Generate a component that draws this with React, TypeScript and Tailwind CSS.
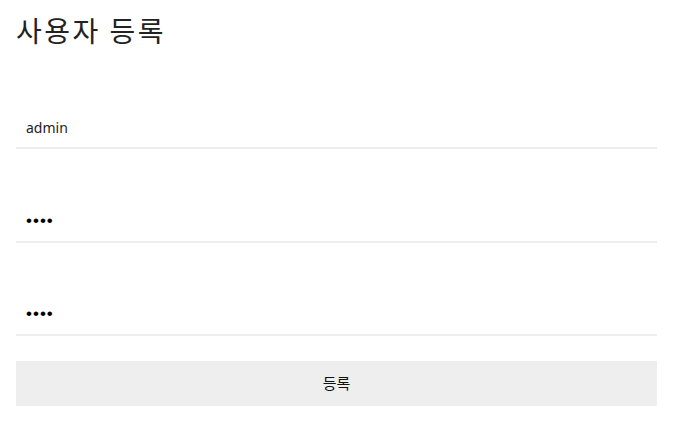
import React from "react";

export default function App() {
  return (
    <div className="flex w-[673px] h-[425px] flex-col bg-white px-4 font-['Noto_Sans','Noto_Sans_CJK_KR',sans-serif]">
      <h1 className="pt-[10px] text-[28px] leading-[40px] font-normal tracking-[2.5px] text-[#222] font-['Noto_Sans_CJK_KR',sans-serif]">
        사용자 등록
      </h1>
      <input
        className="mt-[57px] block w-full h-[42px] px-[10px] border-b-2 border-[#eeeeee] text-[14px] text-[#222] outline-none"
        defaultValue="admin"
        readOnly
      />
      <input
        type="password"
        className="mt-[52px] block w-full h-[42px] px-[10px] border-b-2 border-[#eeeeee] text-[17px] tracking-[1px] text-black outline-none font-['Liberation_Sans',sans-serif]"
        defaultValue="1234"
        readOnly
      />
      <input
        type="password"
        className="mt-[51px] block w-full h-[42px] px-[10px] border-b-2 border-[#eeeeee] text-[17px] tracking-[1px] text-black outline-none font-['Liberation_Sans',sans-serif]"
        defaultValue="1234"
        readOnly
      />
      <button className="mt-[25px] block w-full h-[45px] bg-[#eeeeee] text-[15px] text-[#111] font-['Noto_Sans_CJK_KR',sans-serif]">
        등록
      </button>
    </div>
  );
}
